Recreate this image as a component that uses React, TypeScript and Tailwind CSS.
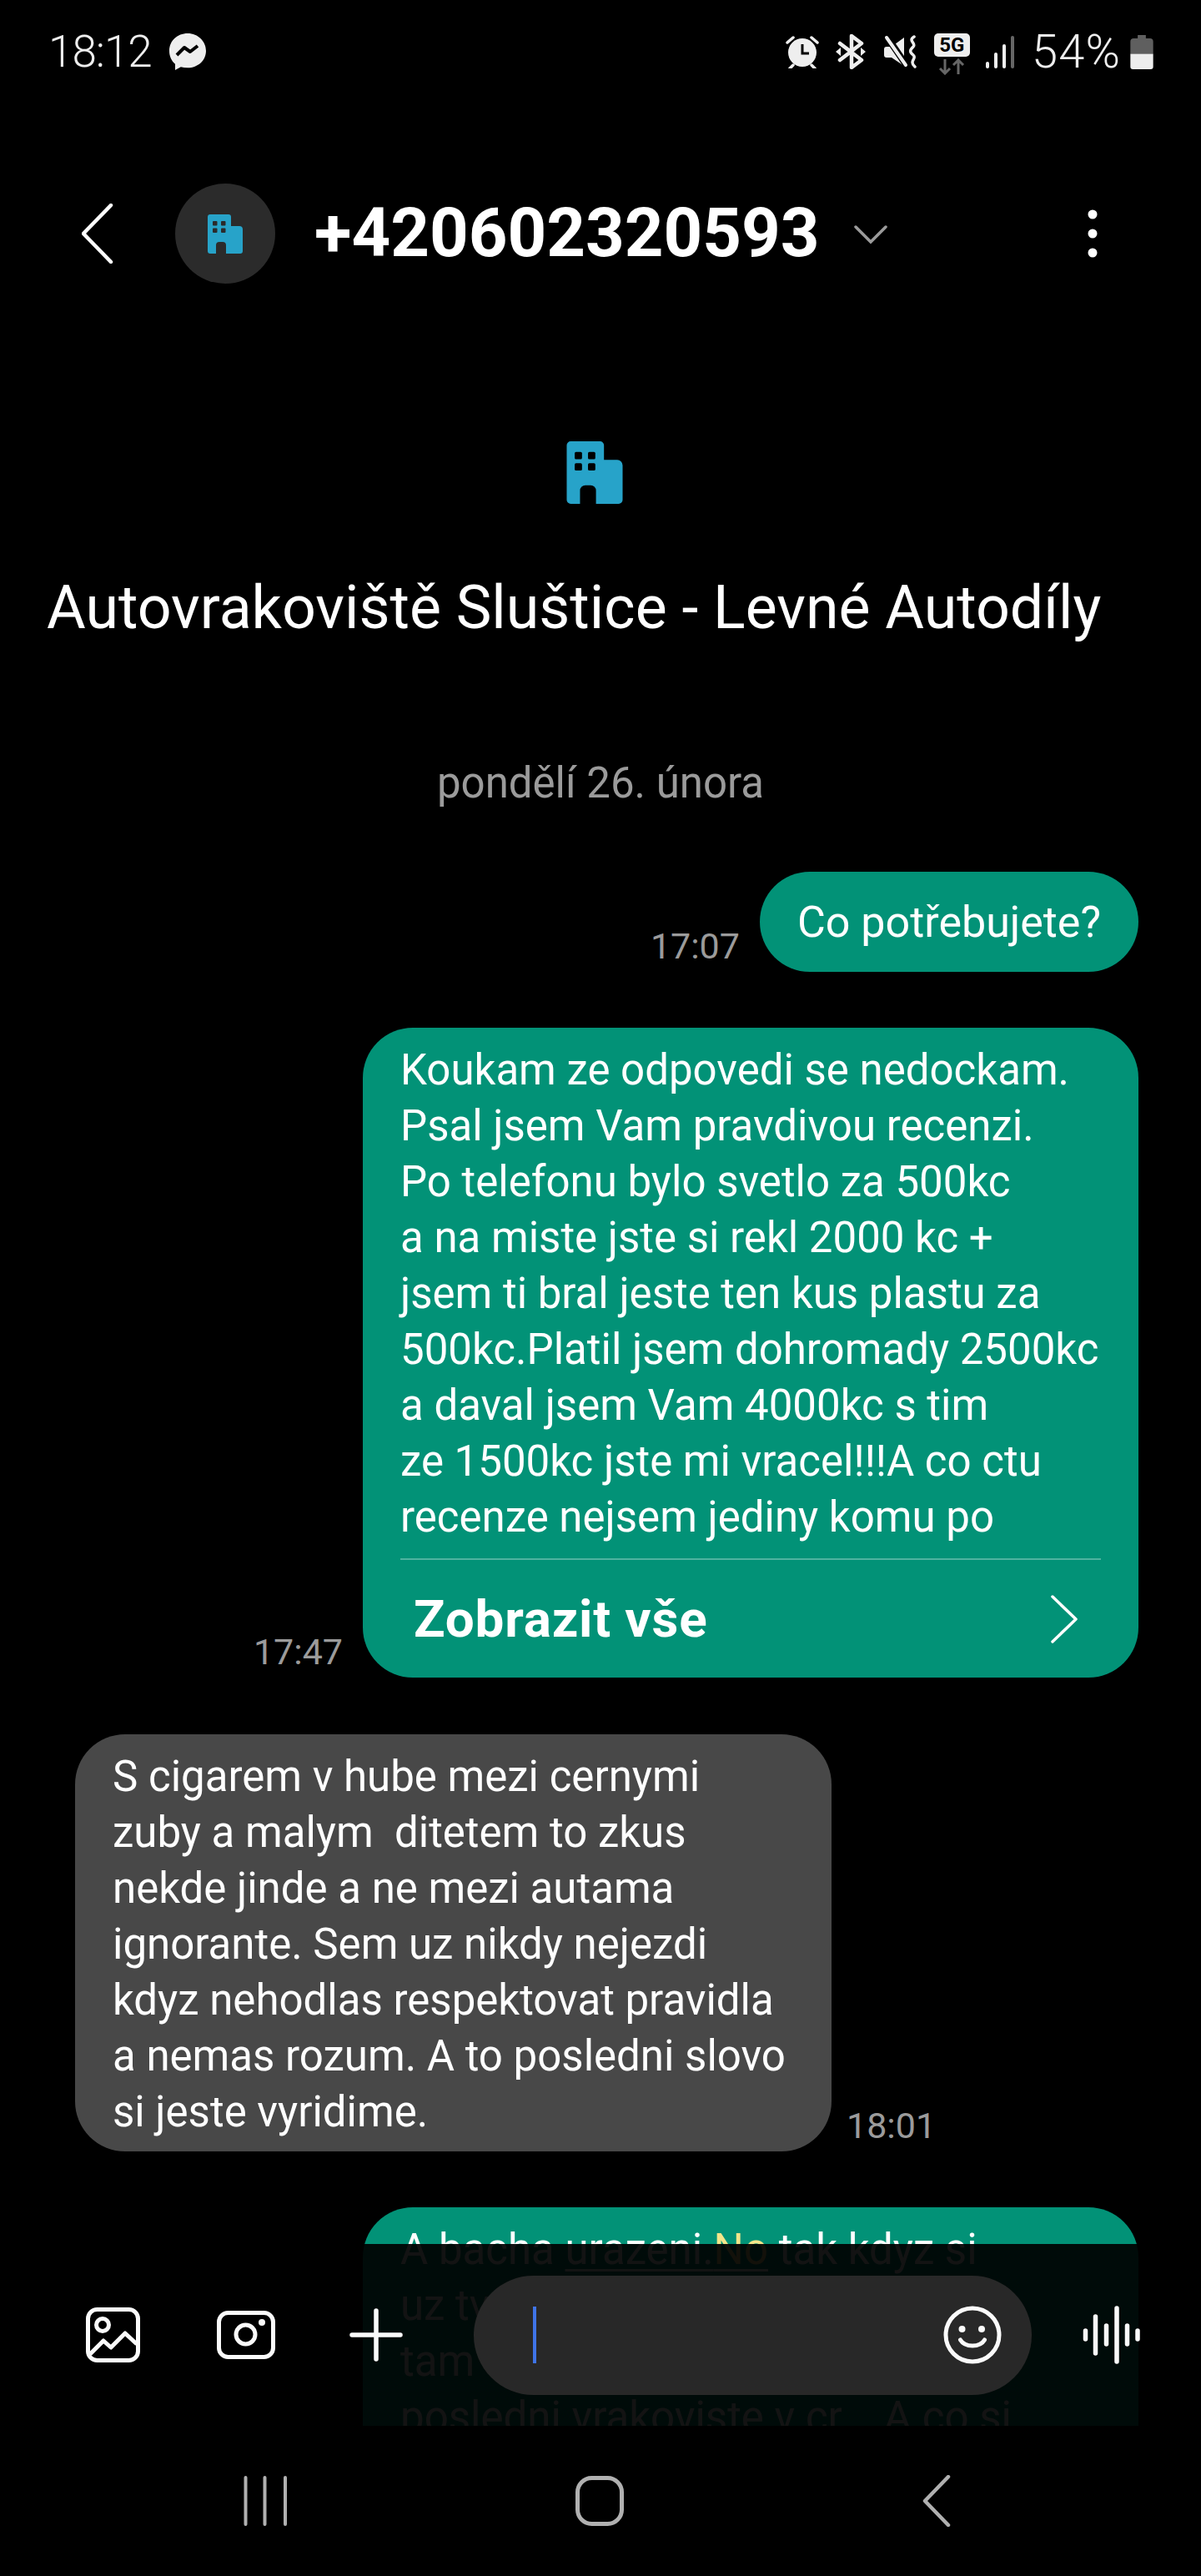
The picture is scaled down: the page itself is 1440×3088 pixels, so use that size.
const font = { fontFamily: '"Roboto", sans-serif' };

function Building({ width, height, fg, hole }: { width: number; height: number; fg: string; hole: string }) {
  return (
    <svg width={width} height={height} viewBox="0 0 42 47">
      <path d="M0 3a3 3 0 0 1 3-3h22a3 3 0 0 1 3 3v11h10a4 4 0 0 1 4 4v26a3 3 0 0 1-3 3H22V37a4 4 0 0 0-4-4h-4a4 4 0 0 0-4 4v10H3a3 3 0 0 1-3-3z" fill={fg} />
      <g fill={hole}>
        <rect x="6" y="8" width="5.500" height="5.500" rx="1" />
        <rect x="16" y="8" width="5.500" height="5.500" rx="1" />
        <rect x="6" y="16.500" width="5.500" height="5.500" rx="1" />
        <rect x="16" y="16.500" width="5.500" height="5.500" rx="1" />
      </g>
    </svg>
  );
}

function StatusIcons() {
  return (
    <div className="flex items-center">
      <svg width="40" height="40" viewBox="0 0 40 40" className="mr-[20px]">
        <circle cx="20" cy="21" r="17" fill="#eee" />
        <path d="M20 11v11h8" stroke="#000" strokeWidth="3" fill="none" />
        <path d="M2 9l7-6M38 9l-7-6M9 36l-4 4M31 36l4 4" stroke="#eee" strokeWidth="3.500" strokeLinecap="round" />
      </svg>
      <svg width="36" height="42" viewBox="0 0 36 42" className="mr-[22px]">
        <path d="M5 11l26 20-12 9V2l12 9L5 31" stroke="#eee" strokeWidth="4.500" fill="none" strokeLinejoin="round" strokeLinecap="round" />
        <path d="M0 21l6-5v10zM36 21l-6-5v10z" fill="#eee" />
      </svg>
      <svg width="40" height="40" viewBox="0 0 40 40" className="mr-[20px]">
        <path d="M3 14h6L24 3v34L9 27H3a3 3 0 0 1-3-3v-7a3 3 0 0 1 3-3z" fill="#eee" />
        <path d="M2 0l26 38" stroke="#000" strokeWidth="8" />
        <path d="M3 3l23 33" stroke="#eee" strokeWidth="4" strokeLinecap="round" />
        <path d="M36 2c-8 5 3 8-1 12s-5 6 0 10-6 7 2 14" stroke="#eee" strokeWidth="3.500" fill="none" strokeLinecap="round" />
      </svg>
      <div className="flex flex-col items-center mr-[18px] mt-[6px] w-[43px]">
        <div className="w-[43px] h-[28px] rounded-[5px] bg-[#eeeeee] flex items-center justify-center text-black text-[24px] font-bold leading-none" style={font}>5G</div>
        <svg width="32" height="20" viewBox="0 0 32 20" className="mt-[2px]">
          <path d="M8 1v17M2 12l6 6 6-6M24 19V2M18 8l6-6 6 6" stroke="#666" strokeWidth="3" fill="none" />
        </svg>
      </div>
      <svg width="36" height="40" viewBox="0 0 36 40" className="mr-[20px]">
        <rect x="1" y="32" width="4" height="8" rx="2" fill="#eee" />
        <rect x="11" y="21" width="4" height="19" rx="2" fill="#eee" />
        <rect x="21" y="11" width="4" height="29" rx="2" fill="#eee" />
        <rect x="31" y="1" width="4" height="39" rx="2" fill="#666" />
      </svg>
      <span className="text-[56px] leading-none text-[#eeeeee] mr-[11px] font-light tracking-[1.2px]" style={font}>54%</span>
      <svg width="28" height="41" viewBox="0 0 28 42">
        <path d="M9 0h10v4h5a4 4 0 0 1 4 4v15H0V8a4 4 0 0 1 4-4h5z" fill="#5f5f5f" />
        <path d="M0 23h28v16a3 3 0 0 1-3 3H3a3 3 0 0 1-3-3z" fill="#eee" />
      </svg>
    </div>
  );
}

function Time({ children, className }: { children: string; className: string }) {
  return <span className={`text-[43px] leading-[50px] text-[#9b9b9b] ${className}`}>{children}</span>;
}

function Lines({ lines }: { lines: string[] }) {
  return (
    <>
      {lines.map((l) => (
        <div key={l} className="whitespace-pre">{l}</div>
      ))}
    </>
  );
}

export default function App() {
  return (
    <div className="relative w-[1440px] h-[3088px] bg-black overflow-hidden text-white" style={font}>
      {/* status bar */}
      <div className="h-[124px] pl-[58px] pr-[57px] flex items-center justify-between">
        <div className="flex items-center gap-[20px]">
          <span className="text-[53px] leading-none text-[#eeeeee] font-light tracking-[-1px]">18:12</span>
          <svg width="46" height="46" viewBox="0 0 46 46">
            <path d="M23 1C10.500 1 1 10 1 22c0 6.500 2.700 12 7 15.800V45l6.800-3.800c2.500.7 5.300 1.100 8.200 1.100 12.500 0 22-9 22-20.300S35.500 1 23 1z" fill="#eee" />
            <path d="M10 27l9-9 7 5 9-7" stroke="#000" strokeWidth="4" fill="none" strokeLinejoin="round" />
          </svg>
        </div>
        <StatusIcons />
      </div>

      {/* header */}
      <div className="mt-[96px] h-[120px] pl-[98px] pr-[124px] flex items-center">
        <svg width="38" height="72" viewBox="0 0 38 72" className="mr-[74px]">
          <path d="M35 2L2 36l33 34" stroke="#fff" strokeWidth="4.500" fill="none" strokeLinecap="round" strokeLinejoin="round" />
        </svg>
        <div className="w-[120px] h-[120px] rounded-full bg-[#2b2b2b] flex items-center justify-center mr-[47px]">
          <Building width={42} height={47} fg="#27a3c9" hole="#2b2b2b" />
        </div>
        <span className="text-[81.5px] leading-none font-bold">+420602320593</span>
        <svg width="40" height="24" viewBox="0 0 40 24" className="ml-[41px] mt-[2px]">
          <path d="M2 3l18 18L38 3" stroke="#9b9b9b" strokeWidth="3.500" fill="none" strokeLinecap="round" />
        </svg>
        <svg width="12" height="58" viewBox="0 0 12 58" className="ml-auto">
          <circle cx="6" cy="6" r="5.500" fill="#fff" />
          <circle cx="6" cy="29" r="5.500" fill="#fff" />
          <circle cx="6" cy="52" r="5.500" fill="#fff" />
        </svg>
      </div>

      {/* contact */}
      <div className="mt-[189px] flex justify-start pl-[679px]">
        <Building width={68} height={75} fg="#27a3c9" hole="#000" />
      </div>
      <div className="mt-[85px] pl-[56px] text-[71.7px] leading-[80px]">Autovrakoviště Sluštice - Levné Autodíly</div>

      <div className="mt-[142px] text-center text-[51px] leading-[56px] text-[#9b9b9b]">pondělí 26. února</div>

      {/* messages */}
      <div className="mt-[78px] px-[75px] flex flex-col text-[51px] leading-[67px]">
        <div className="flex justify-end items-end gap-[24px]">
          <Time className="mb-[6px]">17:07</Time>
          <div className="h-[120px] rounded-[60px] bg-[#029277] px-[45px] flex items-center text-[52px]">Co potřebujete?</div>
        </div>

        <div className="mt-[67px] flex justify-end items-end gap-[24px]">
          <Time className="mb-[6px]">17:47</Time>
          <div className="w-[930px] h-[779px] rounded-[60px] bg-[#029277] px-[45px] pt-[17px] flex flex-col">
            <Lines
              lines={[
                'Koukam ze odpovedi se nedockam.',
                'Psal jsem Vam pravdivou recenzi.',
                'Po telefonu bylo svetlo za 500kc',
                'a na miste jste si rekl 2000 kc +',
                'jsem ti bral jeste ten kus plastu za',
                '500kc.Platil jsem dohromady 2500kc',
                'a daval jsem Vam 4000kc s tim',
                'ze 1500kc jste mi vracel!!!A co ctu',
                'recenze nejsem jediny komu po',
              ]}
            />
            <div className="mt-[16px] h-[2px] bg-[#4fb3a0]" />
            <div className="flex-1 flex items-center justify-between pl-[16px] pr-[28px]">
              <span className="text-[62px] font-bold leading-none tracking-[0.8px]">Zobrazit vše</span>
              <svg width="32" height="58" viewBox="0 0 32 58">
                <path d="M2 2l28 27L2 56" stroke="#fff" strokeWidth="3.500" fill="none" strokeLinecap="round" strokeLinejoin="round" />
              </svg>
            </div>
          </div>
        </div>

        <div className="mt-[68px] pl-[15px] flex items-end gap-[18px]">
          <div className="w-[907px] h-[500px] rounded-[60px] bg-[#484848] px-[45px] pt-[17px]">
            <Lines
              lines={[
                'S cigarem v hube mezi cernymi',
                'zuby a malym  ditetem to zkus',
                'nekde jinde a ne mezi autama',
                'ignorante. Sem uz nikdy nejezdi',
                'kdyz nehodlas respektovat pravidla',
                'a nemas rozum. A to posledni slovo',
                'si jeste vyridime.',
              ]}
            />
          </div>
          <Time className="mb-[6px]">18:01</Time>
        </div>

        <div className="mt-[67px] flex justify-end">
          <div className="w-[930px] h-[400px] rounded-[60px] bg-[#029277] px-[45px] pt-[17px]">
            <div className="whitespace-pre">
              A bacha <span className="underline decoration-[3px] underline-offset-[6px]"><span>urazeni.</span><span className="text-[#f4e58a]">No</span></span> tak kdyz si
            </div>
            <div>uz tv</div>
            <div>tam</div>
            <div className="whitespace-pre">posledni vrakoviste v cr... A co si</div>
          </div>
        </div>
      </div>

      {/* composer overlay */}
      <div className="absolute left-0 right-0 top-[2690px] h-[218px] bg-black/[0.925] flex items-center pl-[103px]">
        <svg width="65" height="66" viewBox="0 0 65 66" className="mr-[92px]">
          <rect x="2.500" y="2.500" width="60" height="61" rx="11" fill="none" stroke="#fafafa" strokeWidth="5" />
          <circle cx="20" cy="21" r="7.500" fill="none" stroke="#fafafa" strokeWidth="5" />
          <path d="M5 56l16-16 9 8 17-17 14 13" fill="none" stroke="#fafafa" strokeWidth="5" strokeLinejoin="round" />
        </svg>
        <svg width="70" height="58" viewBox="0 0 70 58" className="mr-[89px]">
          <rect x="2.500" y="2.500" width="65" height="53" rx="11" fill="none" stroke="#fafafa" strokeWidth="5" />
          <circle cx="34.500" cy="28.500" r="11.500" fill="none" stroke="#fafafa" strokeWidth="5" />
          <circle cx="54" cy="14" r="4" fill="#fafafa" />
        </svg>
        <svg width="64" height="64" viewBox="0 0 64 64" className="mr-[85px]">
          <path d="M3 32h58M32 3v58" stroke="#fafafa" strokeWidth="5.500" strokeLinecap="round" />
        </svg>
        <div className="w-[669px] h-[143px] rounded-full bg-[#282828] flex items-center justify-between pl-[71px] pr-[36px]">
          <div className="w-[4px] h-[68px] bg-[#3f74e8]" />
          <svg width="70" height="70" viewBox="0 0 70 70">
            <circle cx="35" cy="35" r="32" fill="none" stroke="#fafafa" strokeWidth="5" />
            <circle cx="22.500" cy="28" r="4" fill="#fafafa" />
            <circle cx="46" cy="28" r="4" fill="#fafafa" />
            <path d="M20.500 41c3 5 8 7 14.500 7s11.500-2 14.500-7" fill="none" stroke="#fafafa" strokeWidth="5" strokeLinecap="round" />
          </svg>
        </div>
        <svg width="72" height="70" viewBox="0 0 72 70" className="ml-[61px]">
          <g stroke="#fafafa" strokeWidth="5.500" strokeLinecap="round">
            <path d="M3.500 30v10M15.500 13v44M28.500 24v22M41 3v64M53.500 24v22M66 30v10" />
          </g>
        </svg>
      </div>

      {/* navigation bar */}
      <div className="absolute left-0 right-0 top-[2908px] bottom-0 bg-black flex items-center pl-[292px]">
        <svg width="52" height="60" viewBox="0 0 52 60" className="mr-[346px]">
          <path d="M2.500 2v56M25.500 2v56M50 2v56" stroke="#b0b0b0" strokeWidth="4" strokeLinecap="round" />
        </svg>
        <svg width="58" height="60" viewBox="0 0 58 60" className="mr-[358px]">
          <rect x="2.500" y="2.500" width="53" height="55" rx="17" fill="none" stroke="#b0b0b0" strokeWidth="5" />
        </svg>
        <svg width="34" height="62" viewBox="0 0 34 62">
          <path d="M31 2L3 31l28 29" stroke="#b0b0b0" strokeWidth="4.500" fill="none" strokeLinecap="round" strokeLinejoin="round" />
        </svg>
      </div>
    </div>
  );
}
